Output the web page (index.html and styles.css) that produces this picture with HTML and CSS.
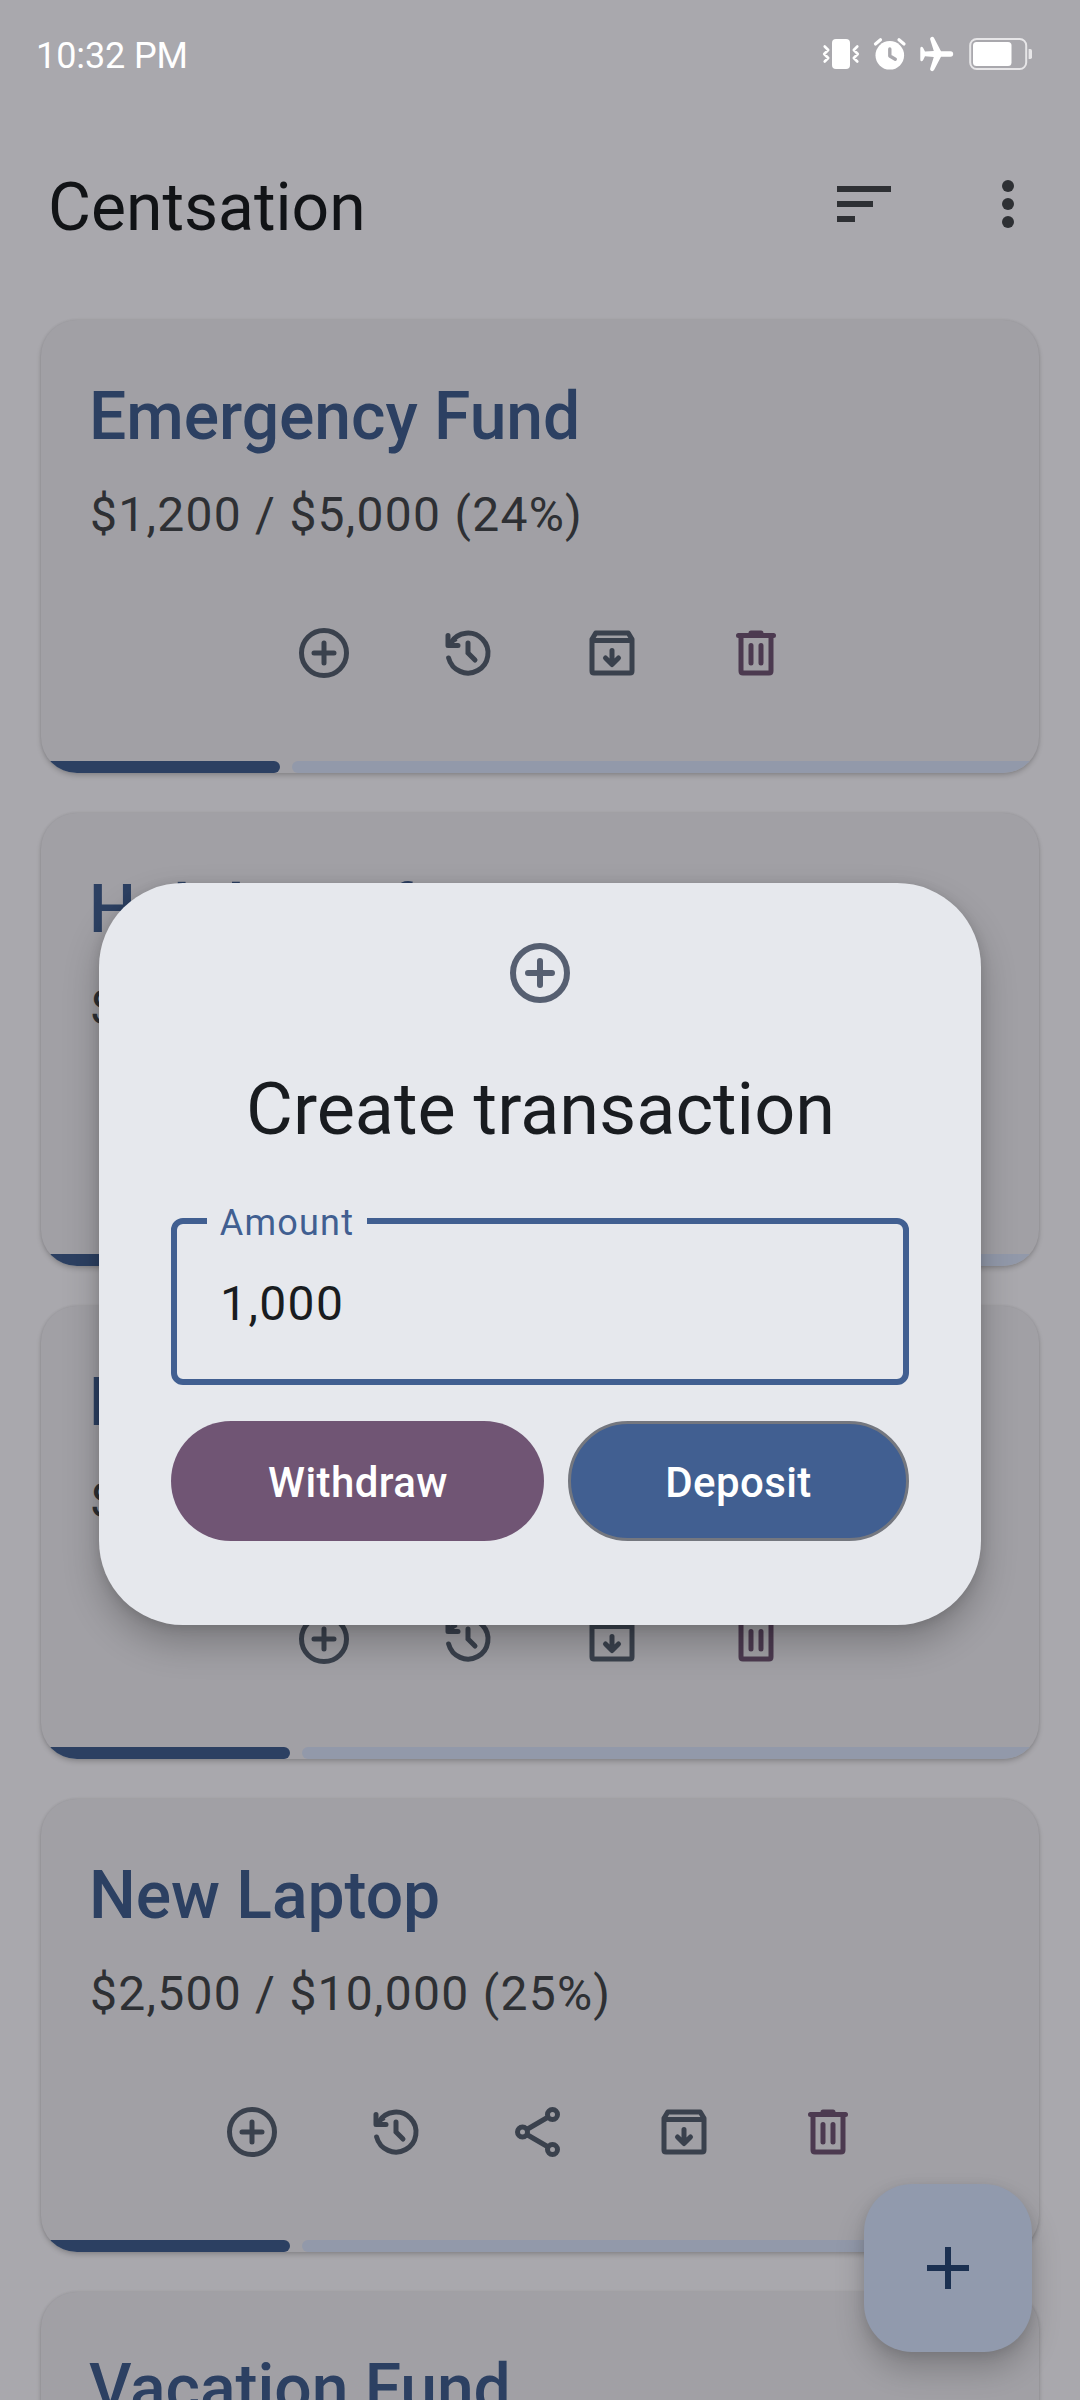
FILE: index.html
```html
<!DOCTYPE html>
<html lang="en">
<head>
<meta charset="utf-8">
<title>Centsation</title>
<link rel="stylesheet" href="styles.css">
</head>
<body>
<svg class="sprite" aria-hidden="true">
  <symbol id="add-circle" viewBox="0 0 24 24">
    <g fill="none" stroke="currentColor" stroke-width="2" stroke-linecap="round"><circle cx="12" cy="12" r="9"/><path d="M12 8v8M8 12h8"/></g>
  </symbol>
  <symbol id="history" viewBox="0 0 24 24">
    <path fill="none" stroke="currentColor" stroke-width="2" stroke-linecap="round" d="M4.25 14A8 8 0 1 0 5.2 7.8M12 8v4l2.8 2.8"/>
    <path fill="currentColor" d="M3 5a1 1 0 0 1 2 0v2.3L6.6 5.700 7.8 7.100 6.200 8H8a1 1 0 0 1 0 2H4a1 1 0 0 1-1-1z"/>
  </symbol>
  <symbol id="archive" viewBox="0 0 24 24">
    <path fill="none" stroke="currentColor" stroke-width="2" stroke-linejoin="round" d="M4 6.500V19.200q0 .8.8.8h14.400q.8 0 .8-.8V6.500L18.500 4H5.500zM4 7h16"/>
    <path fill="none" stroke="currentColor" stroke-width="2" stroke-linecap="round" stroke-linejoin="round" d="M12 11v5.500M9.400 14l2.600 2.600 2.600-2.600"/>
  </symbol>
  <symbol id="trash" viewBox="0 0 24 24">
    <path fill="none" stroke="currentColor" stroke-width="2" stroke-linecap="round" stroke-linejoin="round" d="M5 5h14M10 4h4M6 5v14.200q0 .8.8.8h10.400q.8 0 .8-.8V5M10 9v7M14 9v7"/>
  </symbol>
  <symbol id="share" viewBox="0 0 24 24">
    <g fill="none" stroke="currentColor" stroke-width="2"><circle cx="17" cy="5" r="2"/><circle cx="5" cy="12" r="2"/><circle cx="17" cy="19" r="2"/><path d="M6.700 11l8.600-5M6.700 13l8.600 5"/></g>
  </symbol>
</svg>

<div class="screen">
  <header class="status">
    <span class="time">10:32 PM</span>
    <svg class="status-icons" width="212" height="40" viewBox="0 0 212 40">
      <g fill="#fff">
        <rect x="12" y="5" width="18" height="30" rx="4"/>
        <g fill="none" stroke="#fff" stroke-width="2.600" stroke-linecap="round" stroke-linejoin="round">
          <path d="M4.700 12.500l3.500 3.500-4 4 4 4-3.500 3.500M37.300 12.500l-3.500 3.500 4 4-4 4 3.500 3.500"/>
        </g>
        <circle cx="69.800" cy="21.300" r="14.300"/>
        <path stroke="#fff" stroke-width="3.200" stroke-linecap="round" d="M55.500 10l5-4.200M84 10l-5-4.200"/>
        <path fill="none" stroke="#a9a8ad" stroke-width="3.400" stroke-linecap="round" stroke-linejoin="round" d="M69.800 15v7l5.500 3.200"/>
        <path d="M130.500 17.200q2.700.3 2.700 2.800t-2.700 2.700H121l-6.800 13q-1 1.900-2.800 1.300t-1.200-2.500l3.600-11.500-8.800-.7-1.800 3.700q-.9 1.500-2.200 1.200-.7-.2-.7-1.600V14.500q0-1.400.7-1.600 1.300-.3 2.200 1.200l1.800 3.500 8.800-.5-3.600-11.600Q109.600 3.600 111.400 3t2.800 1.300l6.800 12.900z"/>
        <rect x="150.200" y="5" width="56" height="30" rx="6.500" fill="none" stroke="#e7e6e8" stroke-width="2"/>
        <rect x="153" y="8" width="38.500" height="24" rx="3.500"/>
        <path fill="#e7e6e8" d="M208.600 15h1.700q1.700 0 1.700 1.700v6.600q0 1.700-1.700 1.700h-1.700z"/>
      </g>
    </svg>
  </header>

  <div class="appbar">
    <h1>Centsation</h1>
    <svg width="54" height="36" viewBox="0 0 54 36"><path d="M0 0h54v6H0zM0 15h36v6H0zM0 30h18v6H0z"/></svg>
    <svg class="more" width="12" height="48" viewBox="0 0 12 48"><circle cx="6" cy="6" r="6"/><circle cx="6" cy="24" r="6"/><circle cx="6" cy="42" r="6"/></svg>
  </div>

  <main class="list">
    <article class="card">
      <h2>Emergency Fund</h2>
      <p>$1,200 / $5,000 (24%)</p>
      <div class="actions"><svg><use href="#add-circle"/></svg><svg><use href="#history"/></svg><svg><use href="#archive"/></svg><svg class="danger"><use href="#trash"/></svg></div>
      <div class="bar"><i class="done" style="width:24%"></i><i class="rest"></i></div>
    </article>
    <article class="card">
      <h2>Holiday Gifts</h2>
      <p>$</p>
      <div class="actions"></div>
      <div class="bar"><i class="done" style="width:30%"></i><i class="rest"></i></div>
    </article>
    <article class="card">
      <h2>N</h2>
      <p>$</p>
      <div class="actions"><svg><use href="#add-circle"/></svg><svg><use href="#history"/></svg><svg><use href="#archive"/></svg><svg class="danger"><use href="#trash"/></svg></div>
      <div class="bar"><i class="done" style="width:25%"></i><i class="rest"></i></div>
    </article>
    <article class="card">
      <h2>New Laptop</h2>
      <p>$2,500 / $10,000 (25%)</p>
      <div class="actions"><svg><use href="#add-circle"/></svg><svg><use href="#history"/></svg><svg><use href="#share"/></svg><svg><use href="#archive"/></svg><svg class="danger"><use href="#trash"/></svg></div>
      <div class="bar"><i class="done" style="width:25%"></i><i class="rest"></i></div>
    </article>
    <article class="card">
      <h2>Vacation Fund</h2>
    </article>
  </main>

  <button class="fab" aria-label="Add"><svg width="42" height="42" viewBox="0 0 42 42"><path d="M18 0h6v18h18v6H24v18h-6V24H0v-6h18z"/></svg></button>

  <section class="dialog">
    <svg class="dialog-icon"><use href="#add-circle"/></svg>
    <h3>Create transaction</h3>
    <div class="field"><span class="label">Amount</span><span class="value">1,000</span></div>
    <div class="buttons">
      <button class="withdraw">Withdraw</button>
      <button class="deposit">Deposit</button>
    </div>
  </section>
</div>
</body>
</html>
```
FILE: styles.css
```css
* { box-sizing: border-box; }
body { margin: 0; font-family: Roboto, sans-serif; }
h1, h2, h3, p { margin: 0; }
svg { display: block; flex: none; }
button { border: 0; padding: 0; font-family: inherit; }
.sprite { position: absolute; width: 0; height: 0; }

.screen {
  position: relative;
  width: 1080px;
  height: 2400px;
  overflow: hidden;
  background: #a9a8ad;
}

.status {
  display: flex;
  justify-content: space-between;
  align-items: center;
  height: 108px;
  padding: 0 48px 0 36px;
}
.time { color: #fff; font-size: 36px; line-height: 42px; letter-spacing: -.1px; padding-top: 4px; }

.appbar {
  display: flex;
  align-items: center;
  height: 192px;
  padding: 0 66px 0 48px;
}
.appbar h1 {
  flex: 1;
  font-size: 66px;
  line-height: 84px;
  font-weight: 400;
  color: #111316;
  padding-top: 8px;
}
.appbar svg { fill: #2e3034; }
.appbar .more { margin-left: 111px; }

.list {
  display: flex;
  flex-direction: column;
  gap: 40px;
  padding: 20px 41px 0;
}
.card {
  display: flex;
  flex-direction: column;
  flex: none;
  height: 453px;
  padding-top: 55px;
  border-radius: 36px;
  overflow: hidden;
  background: #a1a0a5;
  box-shadow: 0 3px 5px rgba(0, 0, 0, .17), 0 0 3px rgba(0, 0, 0, .1);
}
.card h2 {
  padding-left: 48px;
  font-size: 66px;
  line-height: 84px;
  font-weight: 500;
  letter-spacing: -.05px;
  color: #2c4062;
}
.card p {
  margin-top: 20px;
  padding-left: 49px;
  font-size: 48px;
  line-height: 72px;
  letter-spacing: 1.27px;
  color: #2e3034;
}
.actions {
  display: flex;
  justify-content: center;
  align-items: center;
  gap: 84px;
  height: 144px;
  margin-top: 30px;
  color: #3a414d;
}
.actions svg { width: 60px; height: 60px; }
.actions .danger { color: #4c3a50; }
.bar { display: flex; gap: 12px; height: 12px; margin-top: auto; margin-left: -1px; }
.bar i { border-radius: 6px; }
.done { background: #2c4062; }
.rest { flex: 1; background: #9299aa; }

.fab {
  position: absolute;
  left: 864px;
  top: 2184px;
  display: grid;
  place-items: center;
  width: 168px;
  height: 168px;
  border-radius: 48px;
  background: #919aad;
  box-shadow: 0 18px 30px rgba(0, 0, 0, .2), 0 3px 12px rgba(0, 0, 0, .1);
}
.fab svg { fill: #1b3051; }

.dialog {
  position: absolute;
  left: 99px;
  top: 883px;
  width: 882px;
  height: 742px;
  padding: 54px 72px 0;
  border-radius: 84px;
  background: #e6e8ed;
  box-shadow: 0 18px 36px rgba(0, 0, 0, .24), 0 2px 12px rgba(0, 0, 0, .12);
}
.dialog-icon { width: 72px; height: 72px; margin: 0 auto; color: #565f71; }
.dialog h3 {
  margin-top: 53px;
  padding-left: 1px;
  font-size: 72px;
  line-height: 96px;
  font-weight: 400;
  text-align: center;
  color: #191c20;
}
.field {
  position: relative;
  display: flex;
  align-items: center;
  height: 167px;
  margin-top: 60px;
  padding: 4px 43px 0;
  border: 6px solid #415f91;
  border-radius: 12px;
}
.label {
  position: absolute;
  left: 30px;
  top: -25px;
  width: 160px;
  text-align: center;
  font-size: 36px;
  line-height: 48px;
  letter-spacing: 1.2px;
  color: #415f91;
  background: #e6e8ed;
}
.value { font-size: 48px; line-height: 72px; letter-spacing: 1.4px; color: #191c20; }
.buttons { display: flex; gap: 24px; margin-top: 36px; }
.buttons button {
  height: 120px;
  padding-top: 2px;
  border-radius: 60px;
  font-size: 42px;
  font-weight: 500;
  letter-spacing: .4px;
  color: #fff;
}
.buttons .withdraw { width: 373px; padding-left: 1px; background: #705574; }
.buttons .deposit { flex: 1; background: #415f91; border: 3px solid #74777f; }
```
